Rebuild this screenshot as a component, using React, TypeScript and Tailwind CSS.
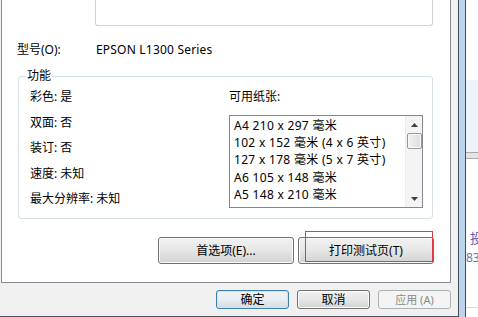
import React from "react";

const FONT = { fontFamily: '"Noto Sans", "Noto Sans CJK SC", sans-serif' };

function WinButton({
  children,
  className = "",
  variant = "normal",
}: {
  children: React.ReactNode;
  className?: string;
  variant?: "normal" | "default" | "disabled";
}) {
  const base =
    "flex items-center justify-center rounded-[3px] border text-[12px] leading-[16px]";
  const v =
    variant === "default"
      ? "border-[#3c7fb1] bg-gradient-to-b from-[#f2f2f2] via-[#e8eef2] to-[#d4dadf] shadow-[inset_0_0_0_1px_#c6e6f7] text-black"
      : variant === "disabled"
      ? "border-[#adb2b5] bg-[#f4f4f4] text-[#8a8a8a]"
      : "border-[#707070] bg-gradient-to-b from-[#f2f2f2] via-[#e6e6e6] to-[#d2d2d2] shadow-[inset_0_0_0_1px_#fbfbfb] text-black";
  return <div className={`${base} ${v} ${className}`}>{children}</div>;
}

export default function App() {
  const papers = [
    "A4 210 x 297 毫米",
    "102 x 152 毫米 (4 x 6 英寸)",
    "127 x 178 毫米 (5 x 7 英寸)",
    "A6 105 x 148 毫米",
    "A5 148 x 210 毫米",
  ];
  const specs = ["彩色: 是", "双面: 否", "装订: 否", "速度: 未知", "最大分辨率: 未知"];

  return (
    <div
      className="flex w-[478px] h-[317px] overflow-hidden bg-[#f0f0f0] text-black"
      style={FONT}
    >
      {/* Dialog */}
      <div className="flex flex-col w-[458px] h-[317px] bg-[#f0f0f0] border-b border-[#4a5560]">
        {/* Tab page */}
        <div className="ml-[1px] w-[450px] h-[283px] bg-white border-l border-r border-b border-[#898c95] flex flex-col">
          {/* top text box */}
          <div className="ml-[93px] w-[338px] h-[26px] border-l border-r border-b border-[#d2d2d2] rounded-b-[3px] bg-white" />

          {/* model row */}
          <div className="mt-[16px] ml-[15px] flex text-[12px] leading-[16px]">
            <span className="w-[79px]">型号(O):</span>
            <span className="tracking-[0.2px]">EPSON L1300 Series</span>
          </div>

          {/* group box */}
          <div className="relative mt-[18px] ml-[16px] w-[415px] h-[143px] border border-[#d5dfe5] rounded-[3px] flex">
            <span className="absolute left-[7px] top-[-9px] bg-white px-[1px] text-[12px] leading-[16px]">
              功能
            </span>
            <div className="w-[210px] pl-[11px] pt-[12px] flex flex-col gap-[9.5px] text-[12px] leading-[16px]">
              {specs.map((s) => (
                <span key={s}>{s}</span>
              ))}
            </div>
            <div className="pt-[12px] flex flex-col">
              <span className="text-[12px] leading-[16px]">可用纸张:</span>
              <div className="mt-[10px] w-[194px] h-[93px] border border-[#828790] bg-white flex">
                <div className="flex-1 pl-[4px] pt-[1px] text-[12px] leading-[17.2px] tracking-[0.3px] whitespace-nowrap overflow-hidden">
                  {papers.map((p) => (
                    <div key={p}>{p}</div>
                  ))}
                </div>
                {/* scrollbar */}
                <div className="w-[17px] h-full bg-[#f4f4f4] border-l border-[#ececec] flex flex-col items-center">
                  <div className="h-[17px] flex items-center justify-center">
                    <svg width="7" height="4" viewBox="0 0 7 4">
                      <path d="M0 4 L3.5 0 L7 4 Z" fill="#404040" />
                    </svg>
                  </div>
                  <div className="w-[15px] h-[16px] rounded-[2px] border border-[#979797] bg-gradient-to-r from-[#f3f3f3] to-[#dcdcdc] shadow-[inset_0_0_0_1px_#fafafa]" />
                  <div className="flex-1" />
                  <div className="h-[17px] flex items-center justify-center">
                    <svg width="7" height="4" viewBox="0 0 7 4">
                      <path d="M0 0 L3.5 4 L7 0 Z" fill="#404040" />
                    </svg>
                  </div>
                </div>
              </div>
            </div>
          </div>

          {/* buttons */}
          <div className="mt-[18px] ml-[156px] flex gap-[4px]">
            <WinButton className="w-[136px] h-[27px]">首选项(E)...</WinButton>
            <div className="relative">
              <WinButton className="w-[136px] h-[27px]">打印测试页(T)</WinButton>
              <div className="absolute left-[7px] top-[-6px] w-[128px] h-[31px] border border-[#e0393e]" />
            </div>
          </div>
        </div>

        {/* bottom buttons */}
        <div className="flex-1 pt-[7px] pl-[216px] flex gap-[8px]">
          <WinButton variant="default" className="w-[73px] h-[19px]">
            确定
          </WinButton>
          <WinButton className="w-[73px] h-[19px]">取消</WinButton>
          <WinButton variant="disabled" className="w-[73px] h-[19px]">
            <span className="text-[11px]">应用 (A)</span>
          </WinButton>
        </div>
      </div>

      {/* window frame */}
      <div className="w-[8px] h-[317px] border-l border-r border-[#3e4c5c] bg-[#bcd4ec]" />

      {/* right window */}
      <div className="w-[12px] h-[317px] bg-white flex flex-col overflow-hidden">
        <div className="h-[80px] bg-[#fdfdfe]" />
        <div className="h-[72px] bg-[#eef3fb]" />
        <div className="h-[7px] border-t border-b border-[#a7a7a7] bg-[#e4e4e4]" />
        <div className="mt-[71px] pl-[4px] text-[13px] leading-[16px] text-[#5a5ab4] whitespace-nowrap">
          投
        </div>
        <div className="mt-[4px] text-[12px] leading-[16px] text-[#6277a6] whitespace-nowrap">
          83
        </div>
        <div className="mt-[41px] border-t border-[#d8d8d8]" />
      </div>
    </div>
  );
}
